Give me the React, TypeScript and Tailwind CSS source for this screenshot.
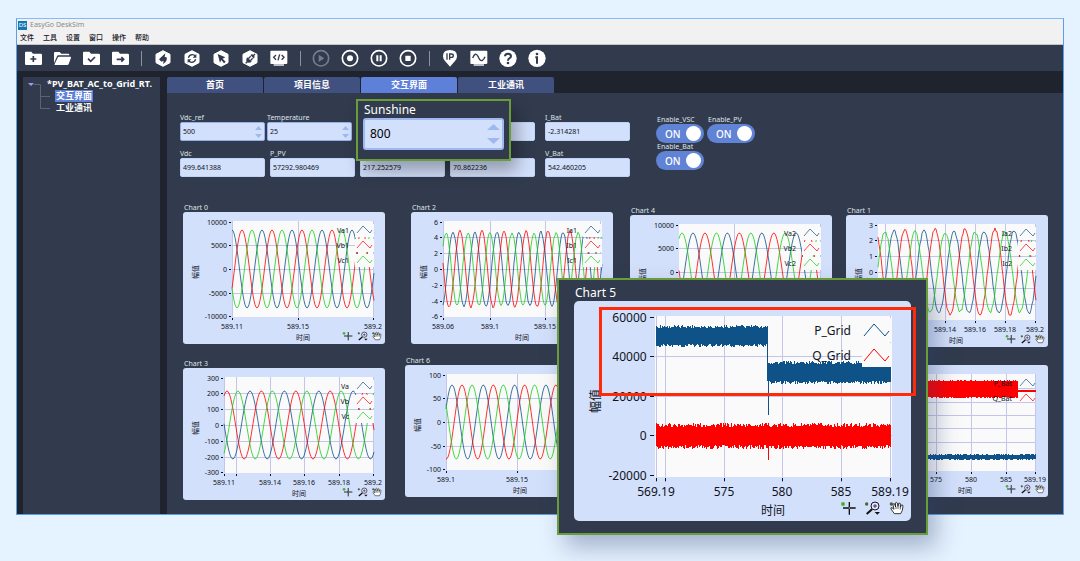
import type { ReactNode } from "react";

type Tick = { at: number; label?: string };

type Wave = { color: string; peak: number; amp: number };

type Band = { color: string; from: number; to: number; top: number; bottom: number; noise: number };

type ChartSpec = {
  width: number;
  height: number;
  plot: { x: number; y: number; w: number; h: number };
  yTicks: Tick[];
  xTicks: Tick[];
  xTitle: [number, number];
  yTitle: [number, number];
  tools: { xs: [number, number, number]; y: number; scale: number };
  legend: { x: number; y: number; step: number; glyph: number; items: { name: string; color: string }[] };
  fontSize: number;
  period?: number;
  ripple?: number;
  waves?: Wave[];
  bands?: Band[];
};

const BLUE = "#0f5288";
const RED = "#ff0000";
const GREEN = "#18cf18";

const FONT = '"Noto Sans", "Noto Sans CJK SC", sans-serif';

// repeatable pseudo random value in 0..1
const rand = (n: number) => {
  const v = Math.sin(n * 127.1 + 311.7) * 43758.5453;
  return v - Math.floor(v);
};

const ticks = (positions: number[], labels: string[]): Tick[] =>
  positions.map((at, i) => ({ at, label: labels[i] || undefined }));

const legendOf = (names: string[]) => ({
  x: 166,
  y: 18,
  step: 15,
  glyph: 174,
  items: names.map((name, i) => ({ name, color: [BLUE, RED, GREEN][i] })),
});

const smallBase = {
  width: 202,
  height: 132,
  yTitle: [12, 60] as [number, number],
  tools: { xs: [165, 180, 194] as [number, number, number], y: 124, scale: 0.22 },
  fontSize: 7,
};

const THIRDS = [10, 25, 41, 57, 73, 89, 104];
const HALVES = [10, 33, 57, 81, 104];

const chart0: ChartSpec = {
  ...smallBase,
  plot: { x: 49, y: 9, w: 142, h: 96 },
  yTicks: ticks(HALVES, ["10000", "5000", "0", "-5000", "-10000"]),
  xTicks: ticks([49, 115, 190], ["589.11", "589.15", "589.2"]),
  xTitle: [120, 125],
  legend: legendOf(["Va1", "Vb1", "Vc1"]),
  period: 30,
  waves: [
    { color: BLUE, peak: 49, amp: 39 },
    { color: RED, peak: 59, amp: 39 },
    { color: GREEN, peak: 69, amp: 39 },
  ],
};

const chart2: ChartSpec = {
  ...smallBase,
  plot: { x: 32, y: 9, w: 159, h: 96 },
  yTicks: ticks(THIRDS, ["6", "4", "2", "0", "-2", "-4", "-6"]),
  xTicks: ticks([32, 79, 134, 189], ["589.06", "589.1", "589.15", "589.2"]),
  xTitle: [111, 125],
  legend: legendOf(["Ia1", "Ib1", "Ic1"]),
  period: 22,
  ripple: 1,
  waves: [
    { color: BLUE, peak: 42, amp: 37 },
    { color: RED, peak: 49, amp: 38 },
    { color: GREEN, peak: 35, amp: 36 },
  ],
};

const chart4: ChartSpec = {
  ...smallBase,
  plot: { x: 49, y: 9, w: 142, h: 96 },
  yTicks: ticks(HALVES, ["10000", "5000", "0", "", ""]),
  xTicks: ticks([104, 190], []),
  xTitle: [120, 125],
  legend: legendOf(["Va2", "Vb2", "Vc2"]),
  period: 34.4,
  waves: [
    { color: BLUE, peak: 63, amp: 39 },
    { color: RED, peak: 75, amp: 39 },
    { color: GREEN, peak: 52, amp: 39 },
  ],
};

const chart1: ChartSpec = {
  ...smallBase,
  plot: { x: 32, y: 9, w: 158, h: 96 },
  yTicks: ticks(THIRDS, ["3", "2", "1", "0", "", "", ""]),
  xTicks: ticks([39, 69, 99, 129, 159, 189], ["", "", "589.14", "589.16", "589.18", "589.2"]),
  xTitle: [110, 125],
  legend: legendOf(["Ia2", "Ib2", "Ic2"]),
  period: 30,
  ripple: 1.5,
  waves: [
    { color: BLUE, peak: 48, amp: 41 },
    { color: RED, peak: 59, amp: 43 },
    { color: GREEN, peak: 39, amp: 40 },
  ],
};

const chart3: ChartSpec = {
  ...smallBase,
  plot: { x: 41, y: 9, w: 150, h: 96 },
  yTicks: ticks(THIRDS, ["300", "200", "100", "0", "-100", "-200", "-300"]),
  xTicks: ticks([41, 53, 87, 121, 156, 190], ["589.11", "", "589.14", "589.16", "589.18", "589.2"]),
  xTitle: [116, 125],
  legend: legendOf(["Va", "Vb", "Vc"]),
  period: 34.4,
  waves: [
    { color: BLUE, peak: 67, amp: 34 },
    { color: RED, peak: 44, amp: 34 },
    { color: GREEN, peak: 55, amp: 34 },
  ],
};

const chart6: ChartSpec = {
  ...smallBase,
  plot: { x: 41, y: 9, w: 150, h: 96 },
  yTicks: ticks(HALVES, ["100", "50", "0", "-50", "-100"]),
  xTicks: ticks([41, 112, 183], ["589.1", "589.15", ""]),
  xTitle: [115, 125],
  legend: legendOf([]),
  period: 31.3,
  waves: [
    { color: BLUE, peak: 47, amp: 37 },
    { color: RED, peak: 57, amp: 37 },
    { color: GREEN, peak: 67, amp: 37 },
  ],
};

const batteryChart: ChartSpec = {
  ...smallBase,
  plot: { x: 32, y: 9, w: 158, h: 97 },
  yTicks: ticks([10, 23, 37, 50, 63, 77, 91, 104], []),
  xTicks: ticks([90, 125, 160, 189], ["575", "580", "585", "589.19"]),
  xTitle: [119, 125],
  legend: legendOf(["P_Bat", "Q_Bat"]),
  bands: [
    { color: RED, from: 32, to: 172, top: 16, bottom: 32, noise: 1 },
    { color: RED, from: 172, to: 190, top: 25, bottom: 27, noise: 0 },
    { color: BLUE, from: 32, to: 190, top: 90, bottom: 94, noise: 1 },
  ],
};

const chart5: ChartSpec = {
  width: 337,
  height: 220,
  plot: { x: 81, y: 15, w: 237, h: 161 },
  yTicks: ticks([16, 55, 95, 134, 174], ["60000", "40000", "20000", "0", "-20000"]),
  xTicks: ticks([82, 91, 150, 208, 267, 316], ["569.19", "", "575", "580", "585", "589.19"]),
  xTitle: [199, 209],
  yTitle: [21, 100],
  tools: { xs: [275, 299, 323], y: 207, scale: 0.333 },
  legend: {
    x: 277,
    y: 29,
    step: 25,
    glyph: 290,
    items: [
      { name: "P_Grid", color: BLUE },
      { name: "Q_Grid", color: RED },
    ],
  },
  fontSize: 12,
  bands: [
    { color: BLUE, from: 82, to: 194, top: 27, bottom: 43, noise: 3 },
    { color: BLUE, from: 193, to: 194, top: 27, bottom: 80, noise: 0 },
    { color: BLUE, from: 194, to: 195, top: 62, bottom: 114, noise: 0 },
    { color: BLUE, from: 195, to: 317, top: 63, bottom: 80, noise: 3 },
    { color: RED, from: 82, to: 317, top: 126, bottom: 144, noise: 4 },
    { color: RED, from: 194, to: 195, top: 127, bottom: 159, noise: 0 },
  ],
};

function wavePath(wave: Wave, spec: ChartSpec) {
  const { x, y, w, h } = spec.plot;
  const mid = y + h / 2;
  const points: string[] = [];
  for (let px = x; px <= x + w; px += 1) {
    const phase = (2 * Math.PI * (px - wave.peak)) / (spec.period ?? 30);
    const ripple = (rand(px + wave.peak * 7) - 0.5) * 2 * (spec.ripple ?? 0);
    points.push(`${px} ${(mid - wave.amp * Math.cos(phase) + ripple).toFixed(2)}`);
  }
  return `M${points.join("L")}`;
}

function bandPath(band: Band) {
  if (!band.noise) {
    return `M${band.from} ${band.top}H${band.to}V${band.bottom}H${band.from}Z`;
  }
  let top = `M${band.from} ${band.bottom}`;
  let bottom = "";
  for (let px = band.from; px < band.to; px += 1) {
    const up = rand(px + band.top) * band.noise;
    const down = rand(px * 3 + band.bottom) * band.noise;
    top += `V${(band.top - up).toFixed(1)}H${px + 1}`;
    bottom = `V${(band.bottom + down).toFixed(1)}H${px}` + bottom;
  }
  return `${top}V${band.bottom}${bottom}Z`;
}

function ChartTools({ xs, y, scale }: ChartSpec["tools"]) {
  const at = (x: number) => `translate(${x} ${y}) scale(${scale})`;
  return (
    <g>
      <g transform={at(xs[0])} stroke="#111" strokeWidth="4" fill="none">
        <path d="M-18 0H20M1 -18V20" />
        <circle cx="1" cy="0" r="3" fill="#d3e0fb" strokeWidth="2" />
        <circle cx="-18" cy="-12" r="6" fill="#4fae36" stroke="none" />
      </g>
      <g transform={at(xs[1])} stroke="#111" strokeWidth="3" fill="none">
        <circle cx="6" cy="-6" r="12" fill="#e6e6fa" />
        <path d="M0 -6H12M6 -12V0" stroke="#3b2c83" />
        <path d="M-3 4L-19 18" strokeWidth="6" />
        <path d="M5 12H21L13 20Z" fill="#111" stroke="none" />
        <circle cx="-19" cy="-12" r="5" fill="#45643a" stroke="none" />
      </g>
      <g transform={at(xs[2])}>
        <circle cx="-17" cy="-12" r="5" fill="#45643a" />
        <path
          d="M-8 17L-18 3Q-20 -2 -15 -1L-9 4L-12 -10Q-11 -15 -7 -12L-4 -3L-5 -15Q-2 -19 1 -15L3 -4L5 -14Q9 -17 10 -12L10 -2L13 -9Q17 -11 18 -6L16 7L11 17Z"
          fill="#fff"
          stroke="#111"
          strokeWidth="2.5"
        />
        <path d="M-3 -3V3M3 -3V3M10 -2V4" stroke="#111" strokeWidth="2" />
      </g>
    </g>
  );
}

function Chart({ spec, name }: { spec: ChartSpec; name: string }) {
  const { plot, legend, fontSize } = spec;
  const large = fontSize > 8;
  const right = plot.x + plot.w;
  const bottom = plot.y + plot.h;
  const k = large ? 1.667 : 1;
  const glyph = large ? "l10 -12l11 12l4 -5" : "l6 -7l7 7l2 -3";

  return (
    <svg
      role="img"
      aria-label={name}
      viewBox={`0 0 ${spec.width} ${spec.height}`}
      className="block h-auto w-full"
      fontFamily={FONT}
      fontSize={fontSize}
      fill="#10131c"
    >
      <rect width={spec.width} height={spec.height} rx={large ? 5 : 3} fill="#d3e0fb" />
      <rect x={plot.x} y={plot.y} width={plot.w} height={plot.h} fill="#fafafa" />

      <g stroke="#c3c5ea" strokeWidth="1">
        {spec.xTicks.map((t) => (
          <path key={t.at} d={`M${t.at + 0.5} ${plot.y}V${bottom}`} />
        ))}
        {spec.yTicks.slice(1, -1).map((t) => (
          <path key={t.at} d={`M${plot.x} ${t.at + 0.5}H${right}`} />
        ))}
      </g>

      {spec.waves?.map((wave) => (
        <path key={wave.color} d={wavePath(wave, spec)} fill="none" stroke={wave.color} strokeOpacity="0.8" />
      ))}
      {spec.bands?.map((band, i) => (
        <path key={i} d={bandPath(band)} fill={band.color} shapeRendering="crispEdges" />
      ))}

      {legend.items.map((item, i) => {
        const y = legend.y + i * legend.step;
        return (
          <g key={item.name}>
            {spec.waves && (
              <rect x={legend.glyph - 2} y={y - 6} width={right - legend.glyph + 2} height="13" fill="#fafafa" />
            )}
            {large && (
              <rect x={legend.glyph - 2} y={y - 12} width={right - legend.glyph + 2} height="24" fill="#fafafa" />
            )}
            <text x={legend.x} y={y} textAnchor="end" dominantBaseline="central">
              {item.name}
            </text>
            <path
              d={`M${legend.glyph} ${y + (large ? 6 : 3)}${glyph}`}
              fill="none"
              stroke={item.color}
              strokeOpacity={large ? 1 : 0.7}
            />
          </g>
        );
      })}

      {spec.yTicks.map(
        (t) =>
          t.label && (
            <g key={t.at}>
              <path d={`M${plot.x - 3 * k} ${t.at + 0.5}H${plot.x - 1}`} stroke="#10131c" />
              <text x={plot.x - 5 * k} y={t.at} textAnchor="end" dominantBaseline="central">
                {t.label}
              </text>
            </g>
          )
      )}
      {spec.xTicks.map((t) => (
        <g key={t.at}>
          <path d={`M${t.at + 0.5} ${bottom + 1}v${2 * k}`} stroke="#10131c" />
          {t.label && (
            <text x={t.at} y={large ? 190 : 114} textAnchor="middle" dominantBaseline="central">
              {t.label}
            </text>
          )}
        </g>
      ))}

      <text x={spec.xTitle[0]} y={spec.xTitle[1]} textAnchor="middle" dominantBaseline="central">
        时间
      </text>
      <text
        transform={`translate(${spec.yTitle[0]} ${spec.yTitle[1]}) rotate(-90)`}
        textAnchor="middle"
        dominantBaseline="central"
      >
        幅值
      </text>
      <ChartTools {...spec.tools} />
    </svg>
  );
}

function ChartCard({ name, spec, className = "" }: { name: string; spec: ChartSpec; className?: string }) {
  return (
    <figure className={`min-w-0 flex-1 ${className}`}>
      <figcaption className="h-2 pl-px text-[7px] leading-[8px] text-[#dfe3ea]">{name}</figcaption>
      <Chart spec={spec} name={name} />
    </figure>
  );
}

function Spinner({ large = false }: { large?: boolean }) {
  const size = large ? "h-[6px] w-[13px]" : "h-1 w-[7px]";
  return (
    <span className={`flex flex-col justify-center ${large ? "gap-2" : "gap-1"}`}>
      <button type="button" aria-label="Increase">
        <svg viewBox="0 0 14 7" preserveAspectRatio="none" className={`block ${size}`}>
          <path d="M7 0L14 7H0Z" fill="#9fb9ee" />
        </svg>
      </button>
      <button type="button" aria-label="Decrease">
        <svg viewBox="0 0 14 7" preserveAspectRatio="none" className={`block ${size}`}>
          <path d="M7 7L14 0H0Z" fill="#9fb9ee" />
        </svg>
      </button>
    </span>
  );
}

type FieldProps = { id: string; label?: string; value: string; editable?: boolean; className?: string };

function Field({ id, label, value, editable, className = "" }: FieldProps) {
  return (
    <div className={`w-[85px] ${className}`}>
      <label htmlFor={id} className="block h-2 text-[7px] leading-[8px] text-[#dfe3ea]">
        {label}
      </label>
      <div
        className={`flex h-[19px] items-center rounded-xs border bg-[#d3e0fb] px-[2px] ${
          editable ? "border-[#92b0ec]" : "border-[#c0d2f8]"
        }`}
      >
        <input
          id={id}
          aria-label={label ? undefined : id}
          defaultValue={value}
          readOnly={!editable}
          className="w-full min-w-0 bg-transparent text-[7px] leading-[10px] text-[#10131c] outline-none"
        />
        {editable && <Spinner />}
      </div>
    </div>
  );
}

function Toggle({ label }: { label: string }) {
  return (
    <label className="block w-12 cursor-pointer">
      <span className="block h-2 pl-px text-[7px] leading-[8px] text-[#dfe3ea]">{label}</span>
      <input type="checkbox" role="switch" defaultChecked className="peer sr-only" />
      <span className="flex h-[19px] items-center justify-between rounded-full bg-[#6183d6] pr-[3px] pl-[9px] text-[10px] leading-[12px] font-medium text-white">
        ON
        <span className="size-[15px] rounded-full bg-white" />
      </span>
    </label>
  );
}

const INK = "#313b4d";

function Folder({ children }: { children: ReactNode }) {
  return (
    <>
      <path d="M6 8H22L27 14H50Q54 14 54 18V45Q54 48 50 48H7Q3 48 3 45V11Q3 8 6 8Z" fill="#fff" />
      <g stroke={INK} strokeWidth="5" fill="none">
        {children}
      </g>
    </>
  );
}

function Hexagon({ children }: { children: ReactNode }) {
  return (
    <>
      <path d="M27 5L48 16V41L27 52L6 41V16Z" fill="#fff" stroke="#fff" strokeWidth="3" strokeLinejoin="round" />
      {children}
    </>
  );
}

function Ring({ color = "#fff", children }: { color?: string; children: ReactNode }) {
  return (
    <>
      <circle cx="27" cy="28" r="23" fill="none" stroke={color} strokeWidth="5" />
      <g fill={color}>{children}</g>
    </>
  );
}

function Monitor({ children }: { children: ReactNode }) {
  return (
    <>
      <rect x="1" y="5" width="51" height="40" rx="3" fill="#fff" />
      <rect x="11" y="46" width="31" height="4" fill="#fff" />
      <g stroke={INK} strokeWidth="4" fill="none">
        {children}
      </g>
    </>
  );
}

const toolGroups: { name: string; icon: ReactNode }[][] = [
  [
    { name: "New", icon: <Folder><path d="M28 21V39M19 30H37" /></Folder> },
    {
      name: "Open",
      icon: (
        <>
          <path d="M3 42V12Q3 9 6 9H20L25 14H46Q49 14 49 18V19H16Q13 19 12 22Z" fill="#fff" />
          <path d="M18 23H52Q55 23 54 26L47 45Q46 48 43 48H6Q4 48 5 45L14 26Q15 23 18 23Z" fill="#fff" />
        </>
      ),
    },
    { name: "Save", icon: <Folder><path d="M18 29L26 37L39 24" /></Folder> },
    { name: "Export", icon: <Folder><path d="M17 31H38M31 24L38 31L31 38" /></Folder> },
  ],
  [
    {
      name: "Build",
      icon: (
        <Hexagon>
          <path d="M15 31L34 13L32 24L38 25Q41 37 27 45L29 35L22 38Z" fill={INK} />
        </Hexagon>
      ),
    },
    {
      name: "Reload",
      icon: (
        <Hexagon>
          <path d="M16 26Q19 17 28 17Q34 17 37 22M38 31Q35 40 26 40Q20 40 17 35" stroke={INK} strokeWidth="4" fill="none" />
          <path d="M40 15V26H29ZM14 42V31H25Z" fill={INK} />
        </Hexagon>
      ),
    },
    {
      name: "Select",
      icon: <Hexagon><path d="M17 15L40 25L32 29L41 38L36 43L28 33L24 41Z" fill={INK} /></Hexagon>,
    },
    {
      name: "Connect",
      icon: (
        <Hexagon>
          <path d="M19 25L32 38Q24 44 18 39Q13 33 19 25Z" fill={INK} />
          <path d="M28 18L39 29Q43 23 38 18Q33 14 28 18Z" fill={INK} />
          <path d="M14 43L19 38M22 29L29 22M28 35L35 28M37 20L42 15" stroke={INK} strokeWidth="4" />
        </Hexagon>
      ),
    },
    {
      name: "Script",
      icon: <Monitor><path d="M18 18L11 25L18 32M35 18L42 25L35 32M29 16L24 34" strokeWidth="4" /></Monitor>,
    },
  ],
  [
    { name: "Run", icon: <Ring color="#747d8d"><path d="M20 17L37 28L20 39Z" /></Ring> },
    { name: "Record", icon: <Ring><circle cx="27" cy="28" r="9" /></Ring> },
    { name: "Pause", icon: <Ring><path d="M19 19H25V37H19ZM29 19H35V37H29Z" /></Ring> },
    { name: "Stop", icon: <Ring><rect x="19" y="20" width="16" height="16" rx="1" /></Ring> },
  ],
  [
    {
      name: "IP settings",
      icon: (
        <>
          <path d="M27 53L12 36Q6 29 6 22Q6 3 27 3Q48 3 48 22Q48 29 42 36Z" fill="#fff" />
          <path d="M18 13V32M26 32V15H31Q37 15 37 20Q37 25 31 25H26" stroke={INK} strokeWidth="4" fill="none" />
        </>
      ),
    },
    {
      name: "Scope",
      icon: <Monitor><path d="M8 27Q16 7 24 22Q30 38 37 34Q42 31 45 23" /></Monitor>,
    },
    {
      name: "Help",
      icon: (
        <>
          <circle cx="27" cy="28" r="26" fill="#fff" />
          <path d="M18 22Q18 14 27 14Q36 14 36 22Q36 26 31 28Q27 30 27 35" stroke={INK} strokeWidth="6" fill="none" />
          <circle cx="27" cy="42" r="4" fill={INK} />
        </>
      ),
    },
    {
      name: "About",
      icon: (
        <>
          <circle cx="27" cy="28" r="26" fill="#fff" />
          <circle cx="27" cy="15" r="4" fill={INK} />
          <path d="M22 25H27V44" stroke={INK} strokeWidth="6" fill="none" />
        </>
      ),
    },
  ],
];

const menus = ["文件", "工具", "设置", "窗口", "操作", "帮助"];
const tabs = ["首页", "项目信息", "交互界面", "工业通讯"];

function Toolbar() {
  return (
    <div role="toolbar" className="flex h-[26px] items-center gap-3 bg-[#313b4d] px-[7px]">
      {toolGroups.map((group, i) => (
        <div key={i} className={`flex items-center ${i > 1 ? "gap-[11px]" : "gap-3"}`}>
          {i > 0 && <span className="h-[15px] w-px bg-[#8b93a1]" />}
          <div className="flex gap-[11px]">
            {group.map((tool) => (
              <button key={tool.name} type="button" aria-label={tool.name}>
                <svg viewBox="0 0 54 54" className="block size-[18px]">
                  {tool.icon}
                </svg>
              </button>
            ))}
          </div>
        </div>
      ))}
    </div>
  );
}

function ProjectTree() {
  return (
    <nav className="flex w-[137px] shrink-0 overflow-hidden bg-[#313b4d] pt-px pl-[2px] text-[9px] text-white">
      <svg viewBox="0 0 22 36" className="block h-9 w-[22px] shrink-0 overflow-visible">
        <path d="M3 5H9L6 8Z" fill="#9f9bf0" />
        <path d="M9 6.5H15.500V31M15.500 18.500H25M15.500 30.500H25" fill="none" stroke="#5d6470" />
      </svg>
      <ul className="min-w-0 leading-[12px] whitespace-nowrap">
        <li>
          <a href="#project" className="block font-bold">*PV_BAT_AC_to_Grid_RT.</a>
          <ul className="pl-2">
            <li>
              <a href="#panel" className="inline-block bg-[#5f80d8] px-px align-top leading-[12px] font-bold">交互界面</a>
            </li>
            <li>
              <a href="#comm" className="inline-block px-px align-top leading-[12px] font-bold">工业通讯</a>
            </li>
          </ul>
        </li>
      </ul>
    </nav>
  );
}

function SunshinePopup() {
  return (
    <div className="absolute top-[6px] left-[189px] w-[155px] border-2 border-[#6a9c3a] bg-[#313b4d] px-[5px] pt-px pb-[9px] shadow-[6px_10px_16px_rgba(0,0,0,0.3)]">
      <label htmlFor="sunshine" className="block pl-px text-[12px] leading-[16px] text-white">
        Sunshine
      </label>
      <div className="flex h-8 items-center rounded-[3px] border-2 border-[#9db9f0] bg-[#d3e0fb] pr-[2px] pl-[5px]">
        <input
          id="sunshine"
          defaultValue="800"
          className="w-full min-w-0 bg-transparent text-[12px] leading-[16px] text-black outline-none"
        />
        <Spinner large />
      </div>
    </div>
  );
}

function PowerPopup() {
  return (
    <figure className="absolute top-[185px] left-[390px] w-[371px] border-2 border-[#6a9c3a] bg-[#313b4d] px-[15px] pt-[5px] pb-3 shadow-[8px_12px_22px_rgba(40,60,110,0.35)]">
      <figcaption className="pl-px text-[12px] leading-[16px] text-white">Chart 5</figcaption>
      <Chart spec={chart5} name="Chart 5" />
      <div className="pointer-events-none absolute top-[27px] left-10 h-[89px] w-[317px] border-3 border-[#ff2a0a]" />
    </figure>
  );
}

function Dashboard() {
  return (
    <section className="relative bg-[#313b4d] pt-[21px] pr-[15px] pb-[14px] pl-[13px]">
      <div className="flex">
        <div className="flex flex-col gap-[9px]">
          <div className="flex gap-[2px]">
            <Field id="vdc-ref" label="Vdc_ref" value="500" editable />
            <Field id="temperature" label="Temperature" value="25" editable />
            <Field id="Power" value="" className="ml-24" />
            <Field id="i-bat" label="I_Bat" value="-2.314281" className="ml-2" />
          </div>
          <div className="flex gap-[5px]">
            <Field id="vdc" label="Vdc" value="499.641388" />
            <Field id="p-pv" label="P_PV" value="57292.980469" />
            <Field id="PV voltage" value="217.252579" />
            <Field id="PV current" value="70.862236" />
            <Field id="v-bat" label="V_Bat" value="542.460205" className="ml-[5px]" />
          </div>
        </div>
        <div className="ml-[26px] pt-[2px]">
          <div className="flex gap-[3px]">
            <Toggle label="Enable_VSC" />
            <Toggle label="Enable_PV" />
          </div>
          <Toggle label="Enable_Bat" />
        </div>
      </div>

      <div className="mt-[27px] flex items-start pl-[3px]">
        <ChartCard name="Chart 0" spec={chart0} />
        <ChartCard name="Chart 2" spec={chart2} className="ml-[26px]" />
        <ChartCard name="Chart 4" spec={chart4} className="ml-[17px] pt-[3px]" />
        <ChartCard name="Chart 1" spec={chart1} className="ml-[14px] pt-[3px]" />
      </div>
      <div className="mt-[10px] flex items-start pl-[3px]">
        <ChartCard name="Chart 3" spec={chart3} className="pt-[3px]" />
        <ChartCard name="Chart 6" spec={chart6} className="ml-5" />
        <div className="ml-[19px] flex-1" />
        <ChartCard name="" spec={batteryChart} className="ml-[18px]" />
      </div>

      <SunshinePopup />
      <PowerPopup />
    </section>
  );
}

export default function App() {
  return (
    <div className="min-h-screen bg-[#e5f2ff] px-4 py-[18px] font-['Noto_Sans','Noto_Sans_CJK_SC',sans-serif]">
      <main className="border border-[#5b9fe8] border-t-[#82bdf8] bg-[#1f232e]">
        <header className="border-b border-[#c4c6ca] bg-[#f1f1f1]">
          <div className="flex h-3 items-center gap-[3px] pl-px">
            <span className="flex size-[9px] items-center justify-center bg-[#1478b4] text-[6px] leading-[8px] text-white">
              DS
            </span>
            <h1 className="text-[7px] leading-[10px] text-[#8a8a8a]">EasyGo DeskSim</h1>
          </div>
          <nav className="flex h-[13px] items-center gap-[9px] pl-[3px]">
            {menus.map((menu) => (
              <button key={menu} type="button" className="text-[7px] leading-[10px] font-medium text-[#15171c]">
                {menu}
              </button>
            ))}
          </nav>
        </header>
        <Toolbar />
        <div className="flex pt-[6px] pl-[6px]">
          <ProjectTree />
          <div className="ml-[7px] min-w-0 flex-1">
            <div role="tablist" className="flex gap-px">
              {tabs.map((tab) => (
                <button
                  key={tab}
                  type="button"
                  role="tab"
                  aria-selected={tab === "交互界面"}
                  className={`h-4 w-24 rounded-t-xs text-[9px] leading-[12px] font-bold text-white ${
                    tab === "交互界面" ? "bg-[#5f80d8]" : "bg-[#40507f]"
                  }`}
                >
                  {tab}
                </button>
              ))}
            </div>
            <Dashboard />
          </div>
        </div>
      </main>
    </div>
  );
}
